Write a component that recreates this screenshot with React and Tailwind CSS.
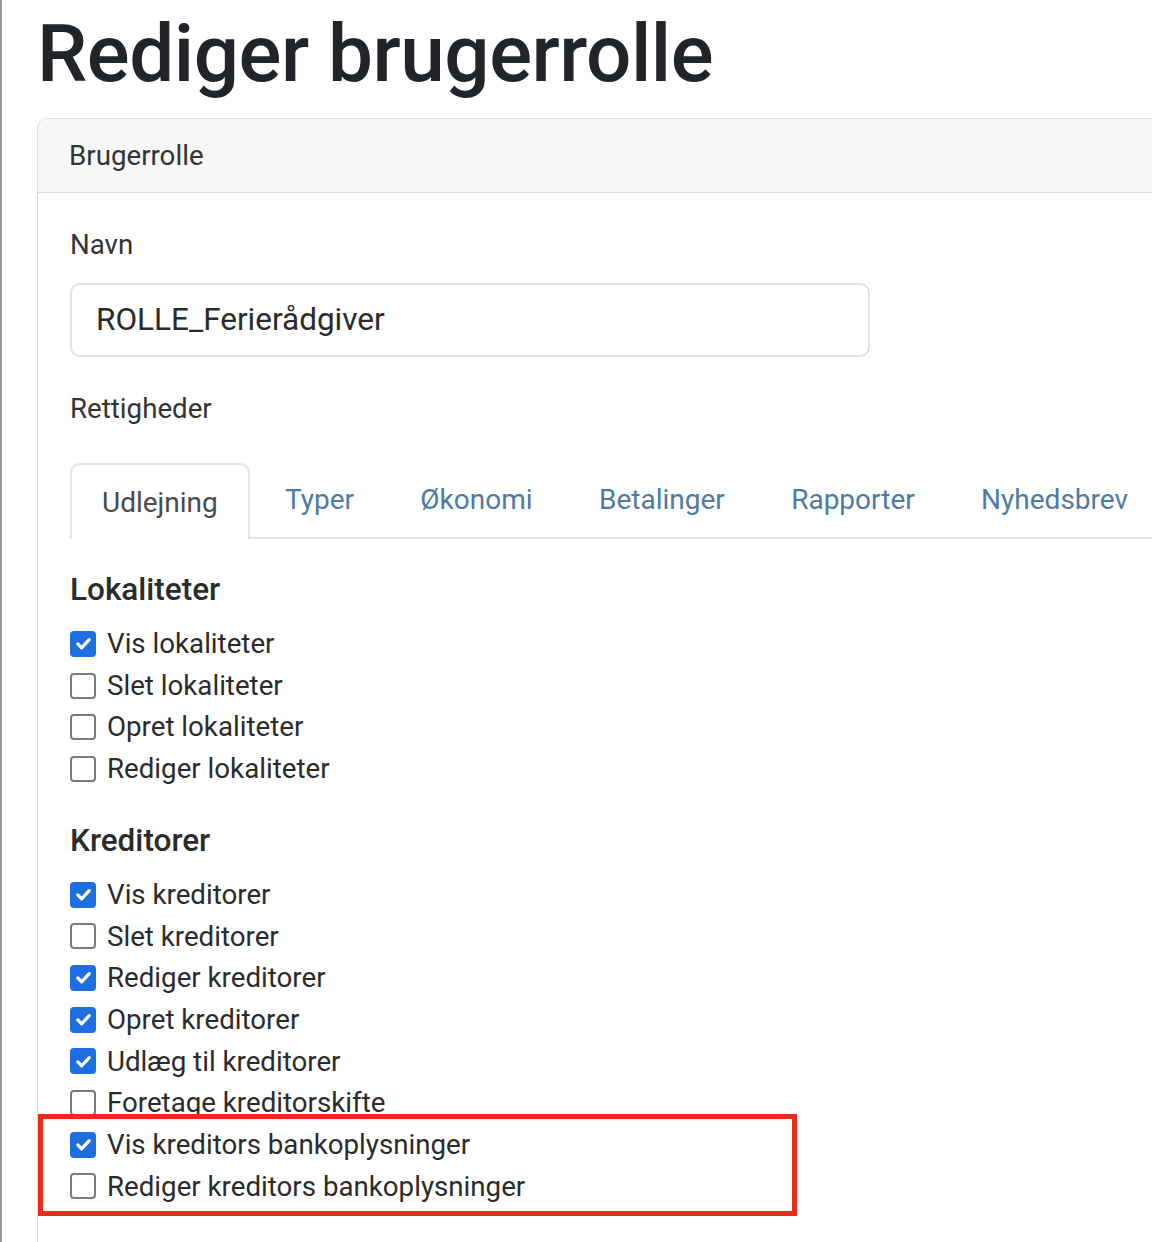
import React from 'react';

// Rettigheder-lister for fanen "Udlejning"
const sections = [
  {
    title: 'Lokaliteter',
    items: [
      { label: 'Vis lokaliteter', checked: true },
      { label: 'Slet lokaliteter', checked: false },
      { label: 'Opret lokaliteter', checked: false },
      { label: 'Rediger lokaliteter', checked: false },
    ],
  },
  {
    title: 'Kreditorer',
    items: [
      { label: 'Vis kreditorer', checked: true },
      { label: 'Slet kreditorer', checked: false },
      { label: 'Rediger kreditorer', checked: true },
      { label: 'Opret kreditorer', checked: true },
      { label: 'Udlæg til kreditorer', checked: true },
      { label: 'Foretage kreditorskifte', checked: false },
    ],
    highlighted: [
      { label: 'Vis kreditors bankoplysninger', checked: true },
      { label: 'Rediger kreditors bankoplysninger', checked: false },
    ],
  },
];

const tabs = ['Udlejning', 'Typer', 'Økonomi', 'Betalinger', 'Rapporter', 'Nyhedsbrev'];

function Checkbox({ checked }) {
  if (checked) {
    return (
      <span className="flex h-[26px] w-[26px] shrink-0 items-center justify-center rounded-[4px] bg-[#1d6fe0]">
        <svg width="19" height="19" viewBox="0 0 20 20" fill="none">
          <path d="M4 10.5l4 4 8-8.5" stroke="white" strokeWidth="3.4" strokeLinecap="round" strokeLinejoin="round" />
        </svg>
      </span>
    );
  }
  return <span className="h-[26px] w-[26px] shrink-0 rounded-[4px] border-2 border-[#7a7a7a] bg-white" />;
}

function Row({ label, checked }) {
  return (
    <div className="flex h-[41.7px] items-center gap-[11px]">
      <Checkbox checked={checked} />
      <span className="text-[27.7px] text-[#2b2b2b]">{label}</span>
    </div>
  );
}

export default function App() {
  return (
    <div
      className="h-[1242px] overflow-hidden border-l-2 border-[#9a9a9a] bg-white pl-[35px] pt-[6px]"
      style={{ fontFamily: 'Roboto, "Liberation Sans", sans-serif' }}
    >
      <h1 className="mb-[16px] text-[80px] font-medium leading-[96px] tracking-[-0.5px] text-[#212529]">
        Rediger brugerrolle
      </h1>

      {/* Kort */}
      <div className="w-[1140px] rounded-tl-[10px] border border-[#dcdcdc]">
        <div className="flex h-[74px] items-center rounded-tl-[10px] border-b border-[#dcdcdc] bg-[#f7f7f7] px-[31px]">
          <span className="text-[27.7px] text-[#333]">Brugerrolle</span>
        </div>

        <div className="px-[32px] pt-[31px] pb-[80px]">
          <div className="mb-[17px] text-[27.7px] leading-[42px] text-[#333]">Navn</div>
          <div className="flex h-[74px] w-[800px] items-center rounded-[10px] border-2 border-[#e3e3e3] px-[24px]">
            <span className="text-[31.5px] text-[#2b2b2b]">ROLLE_Ferierådgiver</span>
          </div>

          <div className="mt-[31px] mb-[33px] text-[27.7px] leading-[42px] text-[#333]">Rettigheder</div>

          {/* Faner */}
          <div className="-mr-[40px] flex h-[76px] border-b-2 border-[#e4e4e4]">
            {tabs.map((t, i) =>
              i === 0 ? (
                <div
                  key={t}
                  className="-mb-[2px] mr-[2px] flex items-center rounded-t-[10px] border-2 border-b-0 border-[#e4e4e4] bg-white px-[30px] pt-[2px] text-[28px] text-[#4a4a4a]"
                >
                  {t}
                </div>
              ) : (
                <div key={t} className="flex items-center px-[33.2px] text-[28px] text-[#4f7aa3]">
                  {t}
                </div>
              )
            )}
          </div>

          {sections.map((s) => (
            <div key={s.title} className="mt-[33px]">
              <h2 className="mb-[15px] text-[31.5px] font-medium leading-[36px] text-[#2b2b2b]">{s.title}</h2>
              {s.items.map((it) => (
                <Row key={it.label} {...it} />
              ))}
              {s.highlighted && (
                <div className="relative">
                  {s.highlighted.map((it) => (
                    <Row key={it.label} {...it} />
                  ))}
                  <div className="pointer-events-none absolute -top-[10px] -bottom-[9px] -left-[32px] w-[759px] border-[5px] border-[#ee2a1b]" />
                </div>
              )}
            </div>
          ))}
        </div>
      </div>
    </div>
  );
}
